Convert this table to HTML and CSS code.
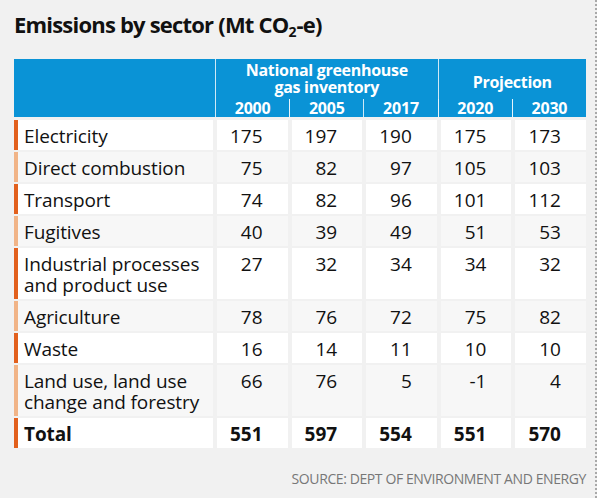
FILE: index.html
```html
<!DOCTYPE html>
<html lang="en">
<head>
<meta charset="utf-8">
<title>Emissions by sector</title>
<link rel="stylesheet" href="styles.css">
</head>
<body>
<div class="page">
  <h1 class="title">Emissions by sector (Mt CO<sub>2</sub>-e)</h1>
  <div class="head">
    <div class="blank"></div>
    <div class="group nat"><span class="gl">National greenhouse</span><span class="gl">gas inventory</span></div>
    <div class="group proj">Projection</div>
    <div class="year">2000</div>
    <div class="year">2005</div>
    <div class="year">2017</div>
    <div class="year">2020</div>
    <div class="year">2030</div>
  </div>
  <div class="rows">
    <div class="row dark"><div class="label">Electricity</div><div class="num">175</div><div class="num">197</div><div class="num">190</div><div class="num">175</div><div class="num">173</div></div>
    <div class="row light alt"><div class="label">Direct combustion</div><div class="num">75</div><div class="num">82</div><div class="num">97</div><div class="num">105</div><div class="num">103</div></div>
    <div class="row dark"><div class="label">Transport</div><div class="num">74</div><div class="num">82</div><div class="num">96</div><div class="num">101</div><div class="num">112</div></div>
    <div class="row light alt"><div class="label">Fugitives</div><div class="num">40</div><div class="num">39</div><div class="num">49</div><div class="num">51</div><div class="num">53</div></div>
    <div class="row dark"><div class="label"><span class="ln">Industrial processes</span><span class="ln">and product use</span></div><div class="num">27</div><div class="num">32</div><div class="num">34</div><div class="num">34</div><div class="num">32</div></div>
    <div class="row light alt"><div class="label">Agriculture</div><div class="num">78</div><div class="num">76</div><div class="num">72</div><div class="num">75</div><div class="num">82</div></div>
    <div class="row dark"><div class="label">Waste</div><div class="num">16</div><div class="num">14</div><div class="num">11</div><div class="num">10</div><div class="num">10</div></div>
    <div class="row light alt"><div class="label"><span class="ln">Land use, land use</span><span class="ln">change and forestry</span></div><div class="num">66</div><div class="num">76</div><div class="num">5</div><div class="num">-1</div><div class="num">4</div></div>
    <div class="row dark total"><div class="label">Total</div><div class="num">551</div><div class="num">597</div><div class="num">554</div><div class="num">551</div><div class="num">570</div></div>
  </div>
  <p class="source">SOURCE: DEPT OF ENVIRONMENT AND ENERGY</p>
</div>
</body>
</html>
```
FILE: styles.css
```css
* { box-sizing: border-box; }
html, body { margin: 0; padding: 0; background: #ffffff; }
body { font-family: "Open Sans", "Noto Sans", sans-serif; color: #111; }

.page {
  width: 597px;
  height: 498px;
  background: #f1f1f1;
  border-right: 2px dotted #a9a9a9;
  padding: 0 9px 0 14px;
  overflow: hidden;
}

.title {
  margin: 0;
  padding-top: 9px;
  font-size: 22px;
  line-height: 30px;
  font-weight: 700;
  letter-spacing: -0.8px;
  color: #111;
  height: 59px;
}
.title sub { font-size: 14px; vertical-align: -4px; line-height: 0; letter-spacing: 0; }

.head {
  display: grid;
  grid-template-columns: 201px repeat(5, 1fr);
  grid-template-rows: 1fr auto;
  height: 58px;
  background: #0a93d6;
  color: #fff;
  font-weight: 700;
  font-size: 16px;
}
.blank { grid-column: 1; grid-row: 1 / 3; }
.group {
  grid-row: 1;
  border-left: 1px solid #cfe9f6;
  text-align: center;
  line-height: 17px;
  display: flex;
  flex-direction: column;
  align-items: center;
  justify-content: center;
  letter-spacing: -0.3px;
}
.gl { display: block; height: 17px; }
.nat { grid-column: 2 / 5; padding-top: 0; }
.proj { grid-column: 5 / 7; padding-top: 7px; }
.year {
  grid-row: 2;
  text-align: center;
  line-height: 18px;
  padding-bottom: 0;
  letter-spacing: -0.2px;
}
.year + .year { border-left: 1px solid #e6f4fb; }
.head .year:nth-of-type(4) { border-left: 1px solid #cfe9f6; }
.head .year:nth-of-type(6) { border-left: 1px solid #cfe9f6; }

.rows {
  display: grid;
  grid-template-columns: 199px repeat(5, 1fr);
  column-gap: 4px;
  row-gap: 2px;
  margin-top: 3px;
  font-size: 19px;
}
.row { display: contents; }
.row > div {
  background: #ffffff;
  padding: 6px 0 3px;
  line-height: 21px;
}
.row.alt > div { background: #f7f7f7; }
.row .label { padding-left: 6px; border-left: 4px solid #e2601d; letter-spacing: -0.1px; }
.ln { display: block; height: 21px; }
.row.light .label { border-left-color: #f1b487; }
.row .num { text-align: right; padding-right: 25px; }
.row.total > div { font-weight: 700; }

.source {
  margin: 0;
  padding-top: 21px;
  text-align: right;
  font-size: 14px;
  color: #777;
  letter-spacing: -0.4px;
}
```
